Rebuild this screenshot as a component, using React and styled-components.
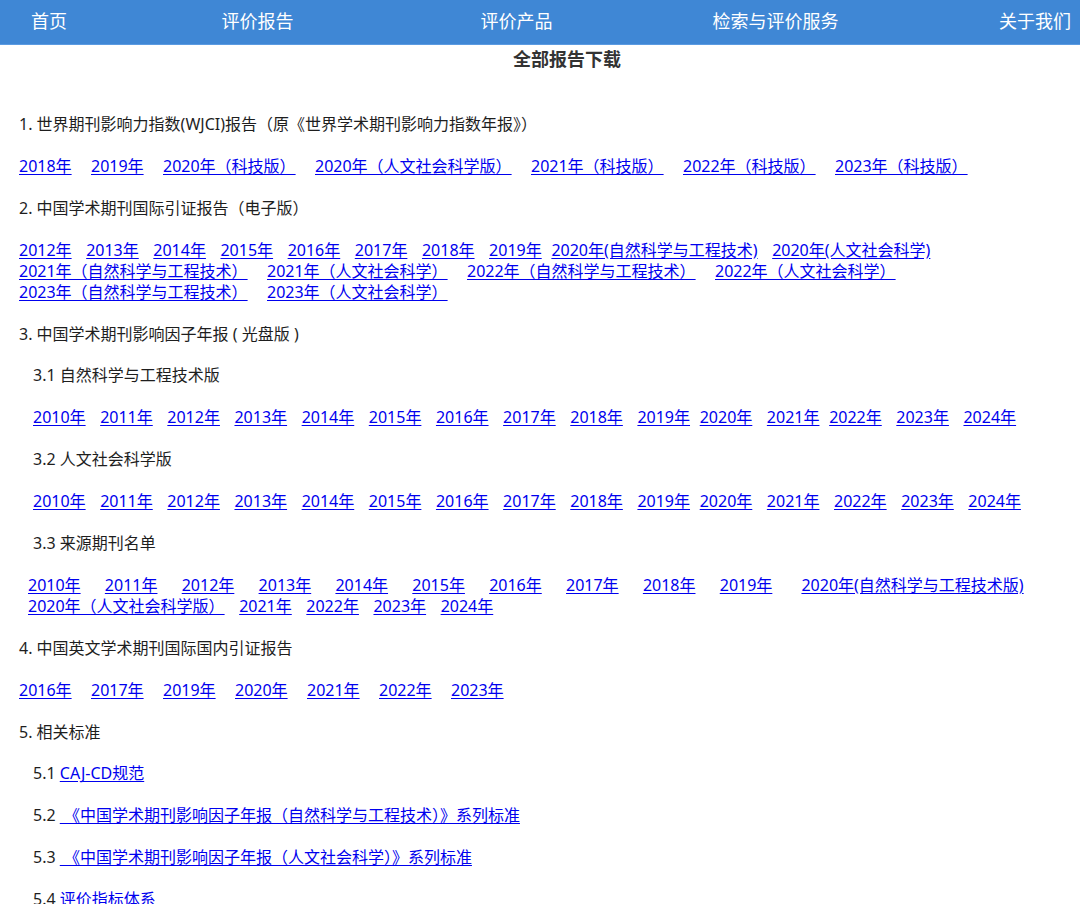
import React, { Fragment } from 'react';
import styled, { createGlobalStyle } from 'styled-components';

const SPACE = 4.85;

const GlobalStyle = createGlobalStyle`
  html, body { margin: 0; padding: 0; background: #fff; }
  body {
    font-family: "Noto Sans", "Noto Sans CJK SC", sans-serif;
    color: #1e1e1e;
    overflow-x: hidden;
  }
`;

// Top navigation
const NavBar = styled.nav`
  display: grid;
  grid-template-columns: 128px 259px 259px 259px 1fr;
  align-items: center;
  height: 44px;
  background: #3f87d5;
  border-bottom: 1px solid #5b9be2;
`;

const NavItem = styled.a`
  color: #fff;
  font-size: 18px;
  line-height: 24px;
  padding-bottom: 3px;
  text-decoration: none;
  cursor: pointer;
  justify-self: ${p => p.$align || 'center'};
  padding-left: ${p => (p.$align === 'start' ? '31px' : '0')};
  padding-right: ${p => (p.$align === 'end' ? '9px' : '0')};
  white-space: nowrap;
`;

const Title = styled.h3`
  margin: 0;
  padding: 2px 0 0 54px;
  font-size: 18px;
  line-height: 24px;
  font-weight: 700;
  color: #333;
  text-align: center;
`;

const Content = styled.main`
  padding: 43px 19px 0;
`;

const Para = styled.div`
  font-size: 16px;
  line-height: 21px;
  margin: 0 0 20.9px;
  padding-left: ${p => p.$indent || 0}px;
  white-space: pre;
`;

const LinkLine = styled.div`
  display: flex;
  align-items: baseline;
`;

const ReportLink = styled.a`
  color: #0000ee;
  text-decoration: underline;
  text-underline-offset: 2px;
  cursor: pointer;
  margin-left: ${p => p.$sp * SPACE}px;
  white-space: pre;
`;

const years = (from, to) => {
  const out = [];
  for (let y = from; y <= to; y++) out.push(`${y}年`);
  return out;
};

// each line: array of [label, spaces-before]
const spaced = (labels, sp) => labels.map((l, i) => [l, i === 0 ? 0 : sp]);

const blocks = [
  { type: 'text', text: '1. 世界期刊影响力指数(WJCI)报告（原《世界学术期刊影响力指数年报》）' },
  {
    type: 'links',
    lines: [
      spaced(['2018年', '2019年', '2020年（科技版）', '2020年（人文社会科学版）', '2021年（科技版）', '2022年（科技版）', '2023年（科技版）'], 4),
    ],
  },
  { type: 'text', text: '2. 中国学术期刊国际引证报告（电子版）' },
  {
    type: 'links',
    lines: [
      [...spaced(years(2012, 2019), 3), ['2020年(自然科学与工程技术)', 2], ['2020年(人文社会科学)', 3]],
      spaced(['2021年（自然科学与工程技术）', '2021年（人文社会科学）', '2022年（自然科学与工程技术）', '2022年（人文社会科学）'], 4),
      spaced(['2023年（自然科学与工程技术）', '2023年（人文社会科学）'], 4),
    ],
  },
  { type: 'text', text: '3. 中国学术期刊影响因子年报 ( 光盘版 )' },
  { type: 'text', text: '3.1 自然科学与工程技术版', indent: 14 },
  {
    type: 'links',
    indent: 14,
    lines: [[...spaced(years(2010, 2019), 3), ['2020年', 2], ['2021年', 3], ['2022年', 2], ['2023年', 3], ['2024年', 3]]],
  },
  { type: 'text', text: '3.2 人文社会科学版', indent: 14 },
  {
    type: 'links',
    indent: 14,
    lines: [[...spaced(years(2010, 2019), 3), ['2020年', 2], ['2021年', 3], ['2022年', 3], ['2023年', 3], ['2024年', 3]]],
  },
  { type: 'text', text: '3.3 来源期刊名单', indent: 14 },
  {
    type: 'links',
    indent: 9,
    lines: [
      [...spaced(years(2010, 2019), 5), ['2020年(自然科学与工程技术版)', 6]],
      spaced(['2020年（人文社会科学版）', '2021年', '2022年', '2023年', '2024年'], 3),
    ],
  },
  { type: 'text', text: '4. 中国英文学术期刊国际国内引证报告' },
  {
    type: 'links',
    lines: [spaced(['2016年', '2017年', '2019年', '2020年', '2021年', '2022年', '2023年'], 4)],
  },
  { type: 'text', text: '5. 相关标准' },
  { type: 'std', num: '5.1', link: 'CAJ-CD规范' },
  { type: 'std', num: '5.2', link: ' 《中国学术期刊影响因子年报（自然科学与工程技术）》系列标准' },
  { type: 'std', num: '5.3', link: ' 《中国学术期刊影响因子年报（人文社会科学）》系列标准' },
  { type: 'std', num: '5.4', link: '评价指标体系' },
];

const navItems = [
  { label: '首页', align: 'start' },
  { label: '评价报告' },
  { label: '评价产品' },
  { label: '检索与评价服务' },
  { label: '关于我们', align: 'end' },
];

const App = () => {
  return (
    <Fragment>
      <GlobalStyle />
      <NavBar>
        {navItems.map(item => (
          <NavItem key={item.label} $align={item.align}>{item.label}</NavItem>
        ))}
      </NavBar>
      <Title>全部报告下载</Title>
      <Content>
        {blocks.map((b, i) => {
          if (b.type === 'text') {
            return <Para key={i} $indent={b.indent}>{b.text}</Para>;
          }
          if (b.type === 'std') {
            return (
              <Para key={i} $indent={14}>
                {b.num + ' '}
                <ReportLink $sp={0}>{b.link}</ReportLink>
              </Para>
            );
          }
          return (
            <Para key={i} $indent={b.indent}>
              {b.lines.map((line, j) => (
                <LinkLine key={j}>
                  {line.map(([label, sp], k) => (
                    <ReportLink key={k} $sp={sp}>{label}</ReportLink>
                  ))}
                </LinkLine>
              ))}
            </Para>
          );
        })}
      </Content>
    </Fragment>
  );
};

export default App;
